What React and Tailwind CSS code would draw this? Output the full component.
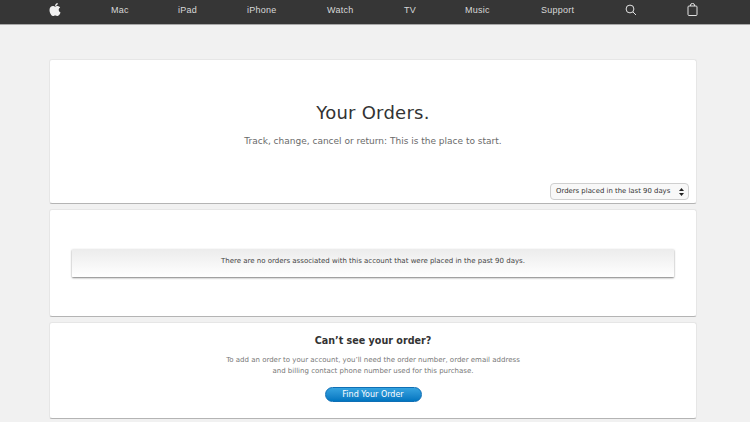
import { FaApple } from "react-icons/fa";

const NAV_ITEMS = [
  { label: "Mac", className: "left-[111px]" },
  { label: "iPad", className: "left-[178px]" },
  { label: "iPhone", className: "left-[247px]" },
  { label: "Watch", className: "left-[327px]" },
  { label: "TV", className: "left-[404px]" },
  { label: "Music", className: "left-[465px]" },
  { label: "Support", className: "left-[541px]" },
];

const lucida = "font-['DejaVu_Sans',sans-serif]";

const NavBar = () => (
  <nav className="relative h-[25px] bg-[#363636] border-b border-[#a8a8a8] font-['Liberation_Sans',sans-serif] text-[9px] text-[#d8d8d8]">
    <FaApple className="absolute left-[48px] top-[2px] w-[14px] h-[15px] text-[#f0f0f0]" />
    {NAV_ITEMS.map((item) => (
      <span key={item.label} className={`absolute top-[4px] leading-[12px] tracking-[0.25px] ${item.className}`}>
        {item.label}
      </span>
    ))}
    <svg className="absolute left-[625px] top-[4px]" width="12" height="12" viewBox="0 0 12 12" fill="none" stroke="#e2e2e2" strokeWidth="1">
      <circle cx="5" cy="5" r="3.9" />
      <path d="M7.9 7.9L11 11" />
    </svg>
    <svg className="absolute left-[687px] top-[3px]" width="11" height="13" viewBox="0 0 11 13" fill="none" stroke="#e2e2e2" strokeWidth="1">
      <rect x="1" y="3" width="9" height="9.5" rx="1" />
      <path d="M3.5 3V2a2 1.5 0 0 1 4 0v1" />
    </svg>
  </nav>
);

const Card = ({ className, children }) => (
  <section className={`ml-[49px] w-[648px] bg-white rounded-[3px] border border-[#e6e6e6] border-b-[#b4b4b4] ${className}`}>
    {children}
  </section>
);

export default function App() {
  return (
    <div className={`w-[750px] h-[422px] overflow-hidden bg-[#f1f1f1] antialiased ${lucida}`}>
      <NavBar />

      <main className="pt-[34px] flex flex-col gap-[5px]">
        <Card className="h-[145px] flex flex-col items-center">
          <h1 className="mt-[42px] text-[18px] leading-[22px] font-normal text-[#333333] tracking-[0.25px]">Your Orders.</h1>
          <p className="mt-[10px] text-[9px] leading-[14px] text-[#6a6a6a]">
            Track, change, cancel or return: This is the place to start.
          </p>
          <div className="mt-auto mb-[3px] mr-[7px] self-end w-[139px] h-[17px] flex items-center justify-between pl-[5px] pr-[4px] rounded-[4px] border border-[#cfcfcf] bg-[#f8f8f8] text-[6.9px] text-[#333333]">
            <span>Orders placed in the last 90 days</span>
            <svg width="5" height="8" viewBox="0 0 5 8" fill="#222222">
              <path d="M2.5 0L5 3H0z" />
              <path d="M2.5 8L0 5h5z" />
            </svg>
          </div>
        </Card>

        <Card className="h-[108px] pt-[39px] px-[22px]">
          <div className="h-[28px] pt-[5px] text-center rounded-[1px] bg-gradient-to-b from-[#ececec] to-white shadow-[0_1px_2px_rgba(0,0,0,0.5)] text-[7px] leading-[15px] text-[#444444]">
            There are no orders associated with this account that were placed in the past 90 days.
          </div>
        </Card>

        <Card className="h-[97px] flex flex-col items-center">
          <h2 className="mt-[11px] text-[9.6px] leading-[14px] font-bold text-[#333333]">Can’t see your order?</h2>
          <p className="mt-[7px] text-[7px] leading-[11px] text-[#777777] text-center">
            To add an order to your account, you’ll need the order number, order email address
            <br />
            and billing contact phone number used for this purchase.
          </p>
          <button className="mt-[10px] w-[97px] h-[15px] rounded-full border border-[#0f6fb5] bg-gradient-to-b from-[#35a3e0] to-[#0076c0] text-[8px] leading-[12px] text-white">
            Find Your Order
          </button>
        </Card>
      </main>
    </div>
  );
}
